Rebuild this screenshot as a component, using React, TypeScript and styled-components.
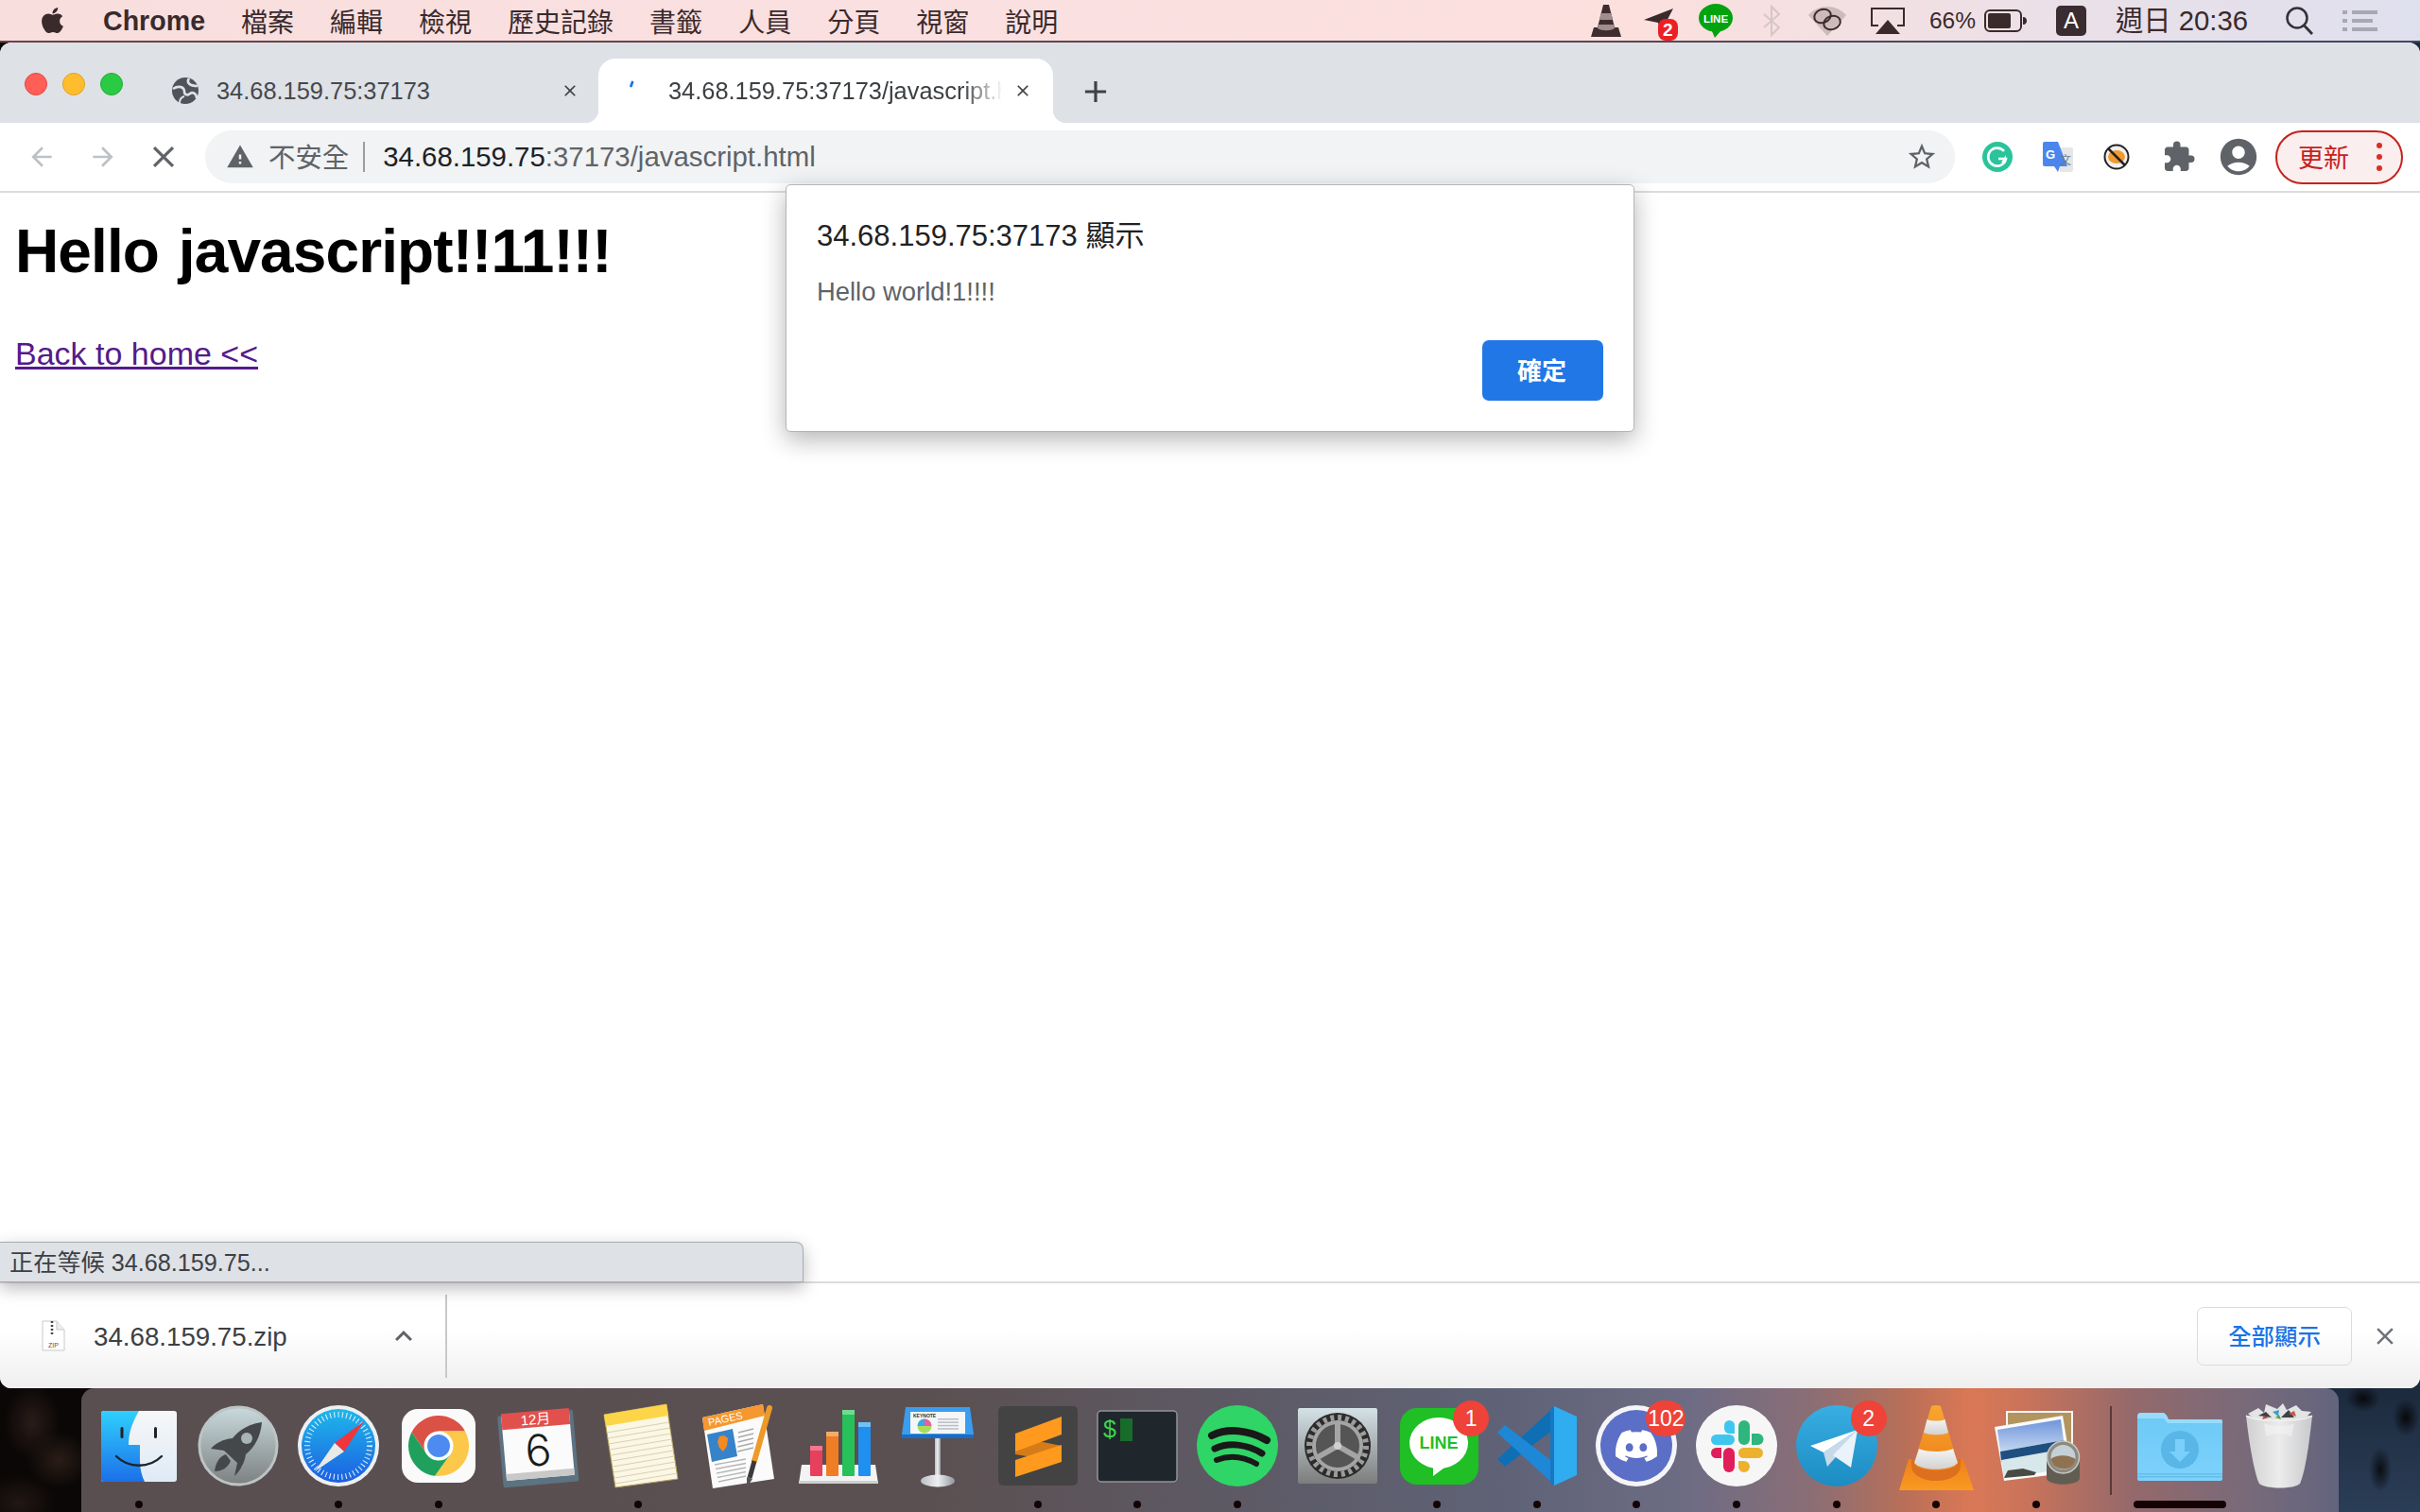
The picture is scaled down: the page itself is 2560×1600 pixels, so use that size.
import React from 'react';
import styled, { createGlobalStyle } from 'styled-components';
import { FaApple, FaDiscord } from 'react-icons/fa';
import { MdClose, MdAdd, MdArrowBack, MdArrowForward, MdWarning, MdStarBorder, MdExtension, MdAccountCircle, MdExpandLess } from 'react-icons/md';

const SANS = '"Liberation Sans","Noto Sans CJK TC",sans-serif';

const Global = createGlobalStyle`
  html, body { margin: 0; padding: 0; background: #0a0706; }
  * { box-sizing: border-box; }
`;

const Screen = styled.div`
  width: 2560px;
  height: 1600px;
  display: flex;
  flex-direction: column;
  overflow: hidden;
  font-family: ${SANS};
  background:
    radial-gradient(ellipse 30px 40px at 34px 1505px, #2a1c18, transparent),
    radial-gradient(ellipse 34px 30px at 62px 1545px, #2b1d18, transparent),
    radial-gradient(ellipse 40px 30px at 20px 1590px, #221713, transparent),
    radial-gradient(ellipse 12px 24px at 2518px 1555px, #0a0d12, transparent),
    radial-gradient(ellipse 18px 14px at 2500px 1480px, #07090c, transparent),
    radial-gradient(ellipse 14px 20px at 2545px 1500px, #07090c, transparent),
    linear-gradient(90deg, #0a0706 0, #0a0706 1280px, transparent 1280px),
    linear-gradient(180deg, #1c2a3d 1469px, #2b3e57 1600px);
`;

/* ---- menu bar ---- */
const MenuBar = styled.header`
  height: 45px;
  flex: none;
  display: flex;
  align-items: center;
  padding: 0 45px 0 40px;
  background: linear-gradient(90deg, #f8dfde 0%, #fae0e0 40%, #fbe0de 68%, #e6e0ea 90%, #dfe0ee 100%);
  border-bottom: 2px solid;
  border-image: linear-gradient(90deg, #6b4347, #5c4750 65%, #404766) 1;
  color: #3a2a2c;
`;
const MenuLeft = styled.nav`
  display: flex;
  align-items: center;
  gap: 38px;
`;
const MenuTitle = styled.span`
  font-size: 28px;
  line-height: 44px;
  white-space: nowrap;
  font-family: "Noto Sans CJK TC", sans-serif;
`;
const AppName = styled.span`
  font: 700 28.6px/44px ${SANS};
`;
const Tray = styled.div`
  margin-left: auto;
  display: flex;
  align-items: center;
`;
const TrayItem = styled.span<{ $ml: number }>`
  margin-left: ${p => p.$ml}px;
  display: flex;
  align-items: center;
  white-space: nowrap;
`;
const TrayText = styled(TrayItem)<{ $size: number }>`
  font-size: ${p => p.$size}px;
  line-height: 44px;
`;

/* ---- browser window ---- */
const BrowserWindow = styled.main`
  flex: none;
  height: 1424px;
  display: flex;
  flex-direction: column;
  background: #fff;
  border-radius: 12px;
  position: relative;
`;
const TabStrip = styled.div`
  height: 85px;
  flex: none;
  display: flex;
  align-items: flex-end;
  background: #dee1e6;
  border-radius: 12px 12px 0 0;
  padding-left: 26px;
`;
const Lights = styled.div`
  display: flex;
  gap: 16px;
  align-self: flex-start;
  margin-top: 32px;
  width: 132px;
`;
const Light = styled.span<{ $c: string; $b: string }>`
  width: 24px;
  height: 24px;
  border-radius: 50%;
  background: ${p => p.$c};
  border: 1px solid ${p => p.$b};
`;
const Tab = styled.div<{ $active?: boolean }>`
  height: 68px;
  flex: none;
  position: relative;
  display: flex;
  align-items: center;
  width: ${p => (p.$active ? 481 : 475)}px;
  padding: 0 ${p => (p.$active ? 22 : 20)}px 0 ${p => (p.$active ? 27 : 24)}px;
  border-radius: 18px 18px 0 0;
  background: ${p => (p.$active ? '#fff' : 'transparent')};
  color: ${p => (p.$active ? '#3c4043' : '#45484c')};
  ${p => p.$active && `
    &::before, &::after {
      content: '';
      position: absolute;
      bottom: 0;
      width: 14px;
      height: 14px;
    }
    &::before { left: -14px; background: radial-gradient(circle at 0 0, transparent 14px, #fff 14.5px); }
    &::after { right: -14px; background: radial-gradient(circle at 100% 0, transparent 14px, #fff 14.5px); }
  `}
`;
const TabIcon = styled.span`
  width: 28px;
  height: 28px;
  margin-right: 19px;
  flex: none;
  display: flex;
`;
const TabTitle = styled.span<{ $fade?: boolean }>`
  flex: 1;
  min-width: 0;
  overflow: hidden;
  white-space: nowrap;
  font-size: 25.4px;
  line-height: 34px;
  ${p => p.$fade && `mask-image: linear-gradient(90deg, #000 88%, transparent 100%); margin-right: 11px;`}
`;
const TabClose = styled.span`
  width: 20px;
  height: 20px;
  flex: none;
  display: flex;
  align-items: center;
  justify-content: center;
  color: #3f4246;
`;
const NewTab = styled.span`
  margin-left: 26px;
  align-self: center;
  margin-top: 19px;
  display: flex;
  color: #3f4347;
`;

const Toolbar = styled.div`
  height: 74px;
  flex: none;
  display: flex;
  align-items: center;
  padding-left: 28px;
  background: #fff;
  border-bottom: 2px solid #dcdce0;
`;
const NavButton = styled.span<{ $ml: number; $c: string }>`
  margin-left: ${p => p.$ml}px;
  display: flex;
  color: ${p => p.$c};
`;
const Omnibox = styled.div`
  width: 1851px;
  height: 56px;
  margin-left: 25px;
  flex: none;
  display: flex;
  align-items: center;
  padding: 0 22px 0 22px;
  border-radius: 28px;
  background: #f1f3f4;
`;
const SecurityIcon = styled.span`
  display: flex;
  color: #5f6368;
`;
const SecurityText = styled.span`
  margin: -3px 0 0 15px;
  font: 28.4px/40px "Noto Sans CJK TC", sans-serif;
  color: #5f6368;
`;
const Separator = styled.span`
  width: 2px;
  height: 32px;
  margin: 0 19px 0 15px;
  background: #9a9da1;
`;
const UrlHost = styled.span`
  font-size: 29.4px;
  color: #202124;
  white-space: nowrap;
`;
const UrlRest = styled.span`
  font-size: 29.4px;
  color: #5f6368;
  white-space: nowrap;
`;
const Star = styled.span`
  margin-left: auto;
  display: flex;
  color: #5f6368;
  margin-right: -4px;
`;
const ToolIcon = styled.span<{ $ml: number; $c?: string }>`
  margin-left: ${p => p.$ml}px;
  display: flex;
  color: ${p => p.$c || '#5f6368'};
`;
const UpdatePill = styled.div`
  width: 135px;
  height: 57px;
  margin-left: 16px;
  flex: none;
  display: flex;
  align-items: center;
  padding-left: 22px;
  border-radius: 29px;
  border: 2.5px solid #c5221f;
  background: #fbeeee;
  color: #c5221f;
  font: 27px/40px "Noto Sans CJK TC", sans-serif;
`;
const UpdateDots = styled.span`
  margin-left: 29px;
  display: flex;
  flex-direction: column;
  gap: 6px;
`;
const UpdateDot = styled.i`
  display: block;
  width: 6px;
  height: 6px;
  border-radius: 50%;
  background: #d93025;
`;

/* ---- page ---- */
const Content = styled.section`
  flex: 1;
  position: relative;
  padding: 24px 16px 0;
  background: #fff;
  color: #000;
`;
const Heading = styled.h1`
  margin: 0;
  font: 700 64px/76px ${SANS};
  letter-spacing: -0.9px;
  word-spacing: 4px;
`;
const BackLink = styled.a`
  display: inline-block;
  margin-top: 50px;
  font-size: 34px;
  line-height: 40px;
  color: #551a8b;
  text-decoration: underline;
`;
const Dialog = styled.div`
  position: absolute;
  top: -9px;
  left: 831px;
  width: 898px;
  height: 262px;
  padding: 34px 33px 0 32px;
  background: #fff;
  border: 1px solid #b5b5b5;
  border-radius: 5px;
  box-shadow: 0 8px 26px rgba(0, 0, 0, 0.3);
  display: flex;
  flex-direction: column;
`;
const DialogTitle = styled.div`
  font-size: 31px;
  line-height: 40px;
  color: #202124;
`;
const DialogMessage = styled.div`
  margin-top: 22px;
  font-size: 27.4px;
  line-height: 34px;
  color: #5f6368;
`;
const DialogActions = styled.div`
  margin-top: 34px;
  display: flex;
  justify-content: flex-end;
`;
const OkButton = styled.button`
  width: 128px;
  height: 64px;
  margin-right: -1px;
  padding: 0 2px 3px 0;
  border: 0;
  border-radius: 7px;
  background: #2277e6;
  color: #fff;
  font: 700 26px/1 "Noto Sans CJK TC", sans-serif;
`;
const StatusBubble = styled.div`
  position: absolute;
  left: 0;
  bottom: -1px;
  width: 850px;
  height: 43px;
  padding: 0 0 4px 10px;
  display: flex;
  align-items: center;
  font-size: 25.2px;
  color: #3c4043;
  background: #dee1e6;
  border: 1px solid #a9abae;
  border-left: 0;
  border-radius: 0 8px 0 0;
  box-shadow: 0 6px 18px rgba(0, 0, 0, 0.28);
  z-index: 2;
`;

/* ---- download shelf ---- */
const Shelf = styled.footer`
  height: 113px;
  flex: none;
  display: flex;
  align-items: center;
  padding-left: 44px;
  border-top: 2px solid #dcdce0;
  border-radius: 0 0 12px 12px;
  background: linear-gradient(180deg, #fff 0%, #fff 45%, #efefef 100%);
`;
const FileIcon = styled.span`
  display: flex;
  width: 25px;
  flex: none;
`;
const FileName = styled.span`
  margin-left: 30px;
  width: 310px;
  padding-top: 2px;
  font-size: 27.7px;
  color: #3c4043;
`;
const ShelfChevron = styled.span`
  display: flex;
  color: #5f6368;
`;
const ShelfDivider = styled.span`
  width: 2px;
  height: 88px;
  margin-left: 26px;
  background: #c9c9cb;
`;
const ShowAll = styled.button`
  margin-left: auto;
  width: 164px;
  height: 62px;
  background: transparent;
  border: 1.5px solid #dadce0;
  border-radius: 7px;
  color: #1a73e8;
  font: 500 24.4px/1 "Noto Sans CJK TC", sans-serif;
`;
const ShelfClose = styled.span`
  margin: 0 22px 0 20px;
  display: flex;
  color: #6f7276;
`;

/* ---- dock ---- */
const Dock = styled.div`
  flex: none;
  width: 2388px;
  height: 131px;
  margin-left: 86px;
  padding-left: 8px;
  display: flex;
  border-radius: 14px 14px 0 0;
  background: linear-gradient(90deg, #5a4f50 0, #5b5051 900px, #5f6276 1500px, #6d6c84 1700px, #8a6e75 1830px, #b96f58 1930px, #da7856 2000px, #c8735a 2060px, #94696b 2170px, #766a7a 2300px, #63647e 2388px);
`;
const DockSlot = styled.div`
  width: 105.65px;
  flex: none;
  position: relative;
  display: flex;
  flex-direction: column;
  align-items: center;
  padding-top: 17px;
`;
const DockDot = styled.i<{ $wide?: boolean; $hide?: boolean }>`
  display: block;
  width: ${p => (p.$wide ? 98 : 8)}px;
  height: 8px;
  margin-top: 14px;
  border-radius: 4px;
  background: ${p => (p.$hide ? 'transparent' : '#140305')};
`;
const DockDivider = styled.span`
  width: 2px;
  height: 94px;
  margin: 19px 19px 0 25px;
  background: #5a3a38;
`;
const Badge = styled.span<{ $x: number; $w: number }>`
  position: absolute;
  top: 13px;
  left: calc(50% + ${p => p.$x}px);
  transform: translateX(-50%);
  min-width: ${p => p.$w}px;
  height: 38px;
  border-radius: 19px;
  background: #ef4238;
  color: #fff;
  font-size: 23px;
  line-height: 38px;
  text-align: center;
`;

/* ---- drawings ---- */
const Svg = styled.svg`
  display: block;
  overflow: visible;
`;
const SvgText = styled.text`
  font-family: ${SANS};
`;
const ThinText = styled.text`
  font-family: Inter, "Liberation Sans", sans-serif;
  font-weight: 300;
`;
const Dock88: React.FC<{ children: React.ReactNode }> = ({ children }) => (
  <Svg width="88" height="88" viewBox="0 0 88 88">{children}</Svg>
);

const Finder = () => (
  <Dock88>
    <defs>
      <linearGradient id="fb" x1="0" y1="0" x2="0" y2="1"><stop offset="0" stopColor="#2fd0fd" /><stop offset="1" stopColor="#1c6fe9" /></linearGradient>
      <linearGradient id="fw" x1="0" y1="0" x2="0" y2="1"><stop offset="0" stopColor="#f6f7f8" /><stop offset="1" stopColor="#dfeaf5" /></linearGradient>
    </defs>
    <rect x="4" y="7" width="80" height="75" rx="3" fill="url(#fw)" />
    <path d="M7 7H44C38 18 33 28 33 43H45V60C45 68 47 76 50 82H7C5 82 4 81 4 79V10C4 8 5 7 7 7Z" fill="url(#fb)" />
    <rect x="24.5" y="24" width="3" height="12" rx="1.5" fill="#222" />
    <rect x="60" y="24" width="3" height="12" rx="1.5" fill="#222" />
    <path d="M20 55C33 68 55 68 68 55" fill="none" stroke="#1c2530" strokeWidth="2.4" strokeLinecap="round" />
  </Dock88>
);
const Launchpad = () => (
  <Dock88>
    <defs>
      <linearGradient id="lp" x1="0" y1="0" x2="0" y2="1"><stop offset="0" stopColor="#c9dadd" /><stop offset="1" stopColor="#7d8080" /></linearGradient>
    </defs>
    <circle cx="44" cy="44" r="41" fill="url(#lp)" stroke="#bcc4c4" strokeWidth="3" />
    <path d="M69 19C55 21 45 27 38 36C28 37 20 41 15 47L29 49L43 62L40 76C46 70 51 62 52 53C62 45 68 33 69 19Z" fill="#45484a" />
    <path d="M31 53C24 55 20 62 19 71C27 71 33 67 36 60Z" fill="#45484a" />
    <circle cx="53" cy="36" r="6" fill="#a9b4b6" />
  </Dock88>
);
const Safari = () => (
  <Dock88>
    <defs>
      <linearGradient id="sf" x1="0" y1="0" x2="0" y2="1"><stop offset="0" stopColor="#1eb8ea" /><stop offset="1" stopColor="#1c5fe2" /></linearGradient>
    </defs>
    <circle cx="44" cy="44" r="43" fill="#eef0f2" />
    <circle cx="44" cy="44" r="39" fill="url(#sf)" />
    <circle cx="44" cy="44" r="33" fill="none" stroke="#d9ecfa" strokeWidth="6" strokeDasharray="1.1 3.2" />
    <polygon points="71,18 40,41 50,50" fill="#f0353b" />
    <polygon points="19,71 40,41 50,50" fill="#e9e9e9" />
  </Dock88>
);
const Chrome = () => (
  <Dock88>
    <rect x="5" y="5" width="78" height="78" rx="17" fill="#fafafa" />
    <path d="M15.5 29.5A32 32 0 0 1 72 28.5H44L31 52Z" fill="#dc5145" />
    <path d="M72 28.5A32 32 0 0 1 40 75.8L57 52L44 28.5Z" fill="#fcc84a" />
    <path d="M40 75.8A32 32 0 0 1 15.5 29.5L31 52L57 52Z" fill="#1fa15d" />
    <circle cx="44" cy="44" r="15.5" fill="#fff" />
    <circle cx="44" cy="44" r="12" fill="#4d8bf0" />
  </Dock88>
);
const Calendar = () => (
  <Dock88>
    <g transform="rotate(-5 44 44)">
      <rect x="4" y="9" width="80" height="76" rx="2" fill="#5c7382" />
      <rect x="8" y="10" width="72" height="68" fill="#fbfbfb" />
      <rect x="8" y="71" width="72" height="7" fill="#c9c9c9" />
      <rect x="8" y="7" width="72" height="17" fill="#e2504d" />
      <SvgText x="44" y="21" fontSize="15" fill="#fff" textAnchor="middle">12月</SvgText>
      <ThinText x="44" y="65" fontSize="46" fill="#1c1c1c" textAnchor="middle">6</ThinText>
    </g>
  </Dock88>
);
const Notes = () => {
  const lines = [0, 1, 2, 3, 4, 5, 6, 7, 8, 9];
  return (
    <Dock88>
      <polygon points="8,11 74,0 86,79 20,88" fill="#fbf7e2" stroke="#b8a25a" strokeWidth="1" />
      <polygon points="8,11 74,0 76,12 10,23" fill="#fdd549" />
      {lines.map(i => (
        <line key={i} x1={11 + i * 1} y1={30 + i * 6} x2={77 + i * 0.9} y2={19 + i * 6} stroke="#d4d0bd" strokeWidth="1" />
      ))}
    </Dock88>
  );
};
const Pages = () => (
  <Dock88>
    <polygon points="6,14 70,0 82,79 17,89" fill="#fbfbfb" />
    <polygon points="6,14 70,0 72,12 8,28" fill="#f6972f" />
    <SvgText x="0" y="0" fontSize="11" fill="#fff" transform="translate(13 23) rotate(-12)">PAGES</SvgText>
    <polygon points="11,32 38,26 43,55 16,61" fill="#3683c9" />
    <path d="M24 34L29 33L33 36L32 44L28 50L24 46L22 40Z" fill="#f48a22" />
    {[0, 1, 2, 3, 4].map(i => (
      <line key={i} x1={44 - i * 0.2} y1={30 + i * 5} x2={60} y2={26 + i * 5} stroke="#aaa" strokeWidth="1.4" />
    ))}
    {[0, 1, 2, 3, 4].map(i => (
      <line key={i} x1={19 + i} y1={64 + i * 4.5} x2={52} y2={58 + i * 4.5} stroke="#b5b5b5" strokeWidth="1.4" />
    ))}
    <line x1="77" y1="4" x2="61" y2="60" stroke="#ee9a28" strokeWidth="6" strokeLinecap="round" />
    <line x1="61" y1="60" x2="56" y2="78" stroke="#3b3b3b" strokeWidth="5" />
    <polygon points="53,77 59,79 53,88" fill="#555" />
  </Dock88>
);
const Numbers = () => (
  <Dock88>
    <polygon points="6,64 84,64 87,84 3,84" fill="#f3f3f3" />
    <rect x="3" y="81" width="84" height="3" fill="#cfcfcf" />
    <rect x="15" y="44" width="13" height="32" rx="1" fill="#e7405c" />
    <rect x="15" y="44" width="13" height="5" fill="#f2778b" />
    <rect x="32" y="29" width="13" height="47" rx="1" fill="#ee7d23" />
    <rect x="32" y="29" width="13" height="5" fill="#f3ab6b" />
    <rect x="49" y="6" width="13" height="70" rx="1" fill="#27c15a" />
    <rect x="49" y="6" width="13" height="5" fill="#6fdc92" />
    <rect x="66" y="19" width="13" height="57" rx="1" fill="#1f8ff0" />
    <rect x="66" y="19" width="13" height="5" fill="#6fc2f7" />
  </Dock88>
);
const Keynote = () => (
  <Dock88>
    <defs>
      <linearGradient id="kb" x1="0" y1="0" x2="1" y2="0"><stop offset="0" stopColor="#b9bfc4" /><stop offset=".5" stopColor="#eef0f2" /><stop offset="1" stopColor="#8f969c" /></linearGradient>
    </defs>
    <rect x="41" y="36" width="6" height="44" fill="url(#kb)" />
    <ellipse cx="44" cy="81" rx="18" ry="6.5" fill="url(#kb)" />
    <polygon points="10,3 78,3 82,32 6,32" fill="#3a9df0" />
    <rect x="6" y="32" width="76" height="4" fill="#1b6cc4" />
    <rect x="15" y="8" width="58" height="23" fill="#f4f6f8" />
    <SvgText x="18" y="14" fontSize="5" fill="#333" fontWeight="700">KEYNOTE</SvgText>
    <circle cx="30" cy="23" r="7.5" fill="#a8dd5b" />
    <path d="M30 23V15.5A7.5 7.5 0 0 1 37.5 23Z" fill="#ef5aa0" />
    <path d="M30 23V15.5A7.5 7.5 0 0 0 22.5 23Z" fill="#38a8e8" />
    {[0, 1, 2, 3].map(i => (
      <rect key={i} x="44" y={15 + i * 3.4} width="22" height="1.5" fill="#b9bdc2" />
    ))}
  </Dock88>
);
const Sublime = () => (
  <Dock88>
    <rect x="2" y="2" width="84" height="84" rx="5" fill="#434343" />
    <polygon points="20,34 69,44 69,61 20,53" fill="#d47c18" />
    <polygon points="69,13 20,31 20,50 69,32" fill="#ff9a1f" />
    <polygon points="69,43 69,61 20,77 20,59" fill="#ff9a1f" />
  </Dock88>
);
const Terminal = () => (
  <Dock88>
    <rect x="2" y="7" width="84" height="75" rx="4" fill="#1f272d" stroke="#8f9598" strokeWidth="1.5" />
    <SvgText x="8" y="35" fontSize="25" fill="#3fd34f">$</SvgText>
    <rect x="26" y="15" width="13" height="24" fill="#186c2a" />
  </Dock88>
);
const Spotify = () => (
  <Dock88>
    <circle cx="44" cy="44" r="43" fill="#2fd566" />
    <path d="M17 33C34 25 56 27 75 38" fill="none" stroke="#191919" strokeWidth="8" strokeLinecap="round" />
    <path d="M20 47C35 40 54 42 70 52" fill="none" stroke="#191919" strokeWidth="7" strokeLinecap="round" />
    <path d="M22 59C35 54 50 55 64 63" fill="none" stroke="#191919" strokeWidth="6" strokeLinecap="round" />
  </Dock88>
);
const SysPrefs = () => (
  <Dock88>
    <defs>
      <linearGradient id="sp" x1="0" y1="0" x2="0" y2="1"><stop offset="0" stopColor="#d4e2e7" /><stop offset="1" stopColor="#7c7c7c" /></linearGradient>
    </defs>
    <rect x="2" y="4" width="84" height="80" rx="2" fill="url(#sp)" />
    <circle cx="44" cy="44" r="35" fill="#2c2c2c" />
    <circle cx="44" cy="44" r="30" fill="none" stroke="#9c9c9c" strokeWidth="6" strokeDasharray="4 3.85" />
    <circle cx="44" cy="44" r="25" fill="#555" stroke="#a5a5a5" strokeWidth="4" />
    <g stroke="#a5a5a5" strokeWidth="6" strokeLinecap="round">
      <line x1="44" y1="44" x2="44" y2="20" />
      <line x1="44" y1="44" x2="65" y2="56" />
      <line x1="44" y1="44" x2="23" y2="56" />
    </g>
    <circle cx="44" cy="44" r="4" fill="#d0d0d0" />
  </Dock88>
);
const Line = () => (
  <Dock88>
    <rect x="5" y="4" width="83" height="81" rx="18" fill="#1fbf25" />
    <ellipse cx="46" cy="41" rx="31" ry="27" fill="#fff" />
    <path d="M40 66L40 76L56 64Z" fill="#fff" />
    <SvgText x="46" y="47" fontSize="18" fontWeight="700" fill="#1fbf25" textAnchor="middle">LINE</SvgText>
  </Dock88>
);
const VSCode = () => (
  <Dock88>
    <polygon points="62,3 62,26 10,66 2,58" fill="#0f6fb5" />
    <polygon points="10,22 62,62 62,85 2,30" fill="#1e88d6" />
    <polygon points="62,2 86,13 86,75 62,86" fill="#2fadf0" />
    <polygon points="62,2 62,86 58,83 58,5" fill="#1678c2" />
  </Dock88>
);
const Discord = () => (
  <Dock88>
    <circle cx="44" cy="44" r="43" fill="#f5f5f8" />
    <circle cx="44" cy="44" r="38" fill="#5b6fc6" />
    <FaDiscord x="20" y="20" size={48} color="#fff" />
  </Dock88>
);
const Slack = () => (
  <Dock88>
    <circle cx="44" cy="44" r="43" fill="#f6f6f6" />
    <rect x="17" y="32" width="25" height="11" rx="5.5" fill="#3fc6ef" />
    <path d="M31 22.5A5.5 5.5 0 0 1 42 22.5V31H36.5A5.5 5.5 0 0 1 31 25.5Z" fill="#3fc6ef" />
    <rect x="46" y="17" width="12" height="26" rx="6" fill="#2eb67d" />
    <path d="M60 31H66.500A5.5 5.5 0 0 1 66.500 43H60Z" fill="#2eb67d" />
    <rect x="46" y="46" width="26" height="11" rx="5.5" fill="#ecb22e" />
    <path d="M46 60H52A6 6 0 0 1 52 72A6 6 0 0 1 46 66Z" fill="#ecb22e" />
    <rect x="30" y="46" width="12" height="26" rx="6" fill="#e01e5a" />
    <path d="M28 46V57H22.500A5.500 5.500 0 0 1 22.500 46Z" fill="#e01e5a" />
  </Dock88>
);
const Telegram = () => (
  <Dock88>
    <defs>
      <linearGradient id="tg" x1="0" y1="0" x2="0" y2="1"><stop offset="0" stopColor="#38aee3" /><stop offset="1" stopColor="#1c8cc2" /></linearGradient>
    </defs>
    <circle cx="44" cy="44" r="43" fill="url(#tg)" />
    <polygon points="66,27 30,51 34,66 42,57" fill="#c8daea" />
    <polygon points="66,27 16,44 30,51" fill="#fff" />
    <polygon points="66,27 40,54 59,67" fill="#eaf3fa" />
  </Dock88>
);
const Vlc = () => (
  <Dock88>
    <defs>
      <linearGradient id="vc" x1="0" y1="0" x2="0" y2="1"><stop offset="0" stopColor="#f9a72f" /><stop offset="1" stopColor="#ee7f1a" /></linearGradient>
      <linearGradient id="vb" x1="0" y1="0" x2="0" y2="1"><stop offset="0" stopColor="#ee7f1a" /><stop offset="1" stopColor="#fa9a22" /></linearGradient>
      <linearGradient id="vs" x1="0" y1="0" x2="0" y2="1"><stop offset="0" stopColor="#f4f4f4" /><stop offset="1" stopColor="#d2d2d2" /></linearGradient>
    </defs>
    <polygon points="15,58 73,58 84,91 5,91" fill="url(#vb)" />
    <path d="M18 58V66C20 86 68 86 70 66V58Z" fill="#dd701f" />
    <path d="M39 2Q44 0 49 2L67 62C62 73 26 73 21 62Z" fill="url(#vc)" />
    <path d="M34.500 16C38 18 50 18 53.500 16L57 30C52 33 36 33 31 30Z" fill="url(#vs)" />
    <path d="M26 47C34 51 54 51 62 47L67 62C60 71 28 71 21 62Z" fill="url(#vs)" />
  </Dock88>
);
const Preview = () => (
  <Dock88>
    <defs>
      <linearGradient id="ps" x1="0" y1="0" x2="0" y2="1"><stop offset="0" stopColor="#6f94dc" /><stop offset="1" stopColor="#c3d7f0" /></linearGradient>
    </defs>
    <rect x="12" y="7" width="71" height="62" fill="#f5f5f5" />
    <rect x="14" y="9" width="67" height="58" fill="#b2945f" />
    <polygon points="0,24 72,12 82,72 10,81" fill="#fafafa" />
    <polygon points="3,27 70,16 73,38 6,50" fill="url(#ps)" />
    <polygon points="6,50 73,38 75,50 7,61" fill="#1f4f80" />
    <polygon points="7,59 75,47 78,68 10,78" fill="#d8e8ea" />
    <polygon points="10,78 14,70 30,68 44,72 42,75" fill="#4a4a44" />
    <path d="M55 56V78C55 87 90 87 90 78V56Z" fill="#625d52" />
    <circle cx="72.500" cy="56" r="17" fill="#8d8a80" stroke="#c8c8c2" strokeWidth="1.500" />
    <circle cx="72.500" cy="56" r="13" fill="#c5d0d6" />
    <path d="M59.500 58C66 52 80 54 85.500 58C84 72 62 72 59.500 58Z" fill="#8f7252" />
  </Dock88>
);
const Folder = () => (
  <Dock88>
    <defs>
      <linearGradient id="fd" x1="0" y1="0" x2="0" y2="1"><stop offset="0" stopColor="#6dc9f6" /><stop offset="1" stopColor="#7dd2fb" /></linearGradient>
    </defs>
    <path d="M-1 13Q-1 9 3 9H26Q28 9 30 12L32 16H87Q89 16 89 19V79Q89 81 87 81H1Q-1 81 -1 79Z" fill="url(#fd)" />
    <path d="M-1 13Q-1 9 3 9H26Q28 9 30 12L32 16H87Q89 16 89 19V20H31L27 15H-1Z" fill="#97dcfc" />
    <rect x="-1" y="73" width="90" height="1.500" fill="#63bdec" />
    <rect x="-1" y="76" width="90" height="1.500" fill="#63bdec" />
    <circle cx="44" cy="48" r="20" fill="#59b6e6" />
    <path d="M39 37H49V50H55L44 61L33 50H39Z" fill="#7ad0fb" />
  </Dock88>
);
const Trash = () => (
  <Dock88>
    <defs>
      <linearGradient id="tr" x1="0" y1="0" x2="1" y2="0"><stop offset="0" stopColor="#d0d0d2" /><stop offset=".5" stopColor="#ececec" /><stop offset="1" stopColor="#c8c9cb" /></linearGradient>
    </defs>
    <path d="M9 12C12 40 18 75 23 84C30 90 60 90 66 84C72 70 76 40 79 12Z" fill="url(#tr)" />
    <path d="M11 10L22 4L28 9L30 0L42 5L48 -1L52 6L62 1L68 7L78 8L72 14L44 18L18 15Z" fill="#e4e4e4" />
    <path d="M22 12L30 8L36 14ZM46 14L54 6L60 14Z" fill="#3d4148" />
    <path d="M37 8L44 6L43 13Z" fill="#3ea0c8" />
    <path d="M40 14L44 11L46 16Z" fill="#4fa84f" />
    <path d="M54 10L60 7L62 13Z" fill="#c65a3c" />
    <path d="M28 12L33 14L26 16Z" fill="#b84a3a" />
    <path d="M9 12C18 19 70 19 79 12" fill="none" stroke="#f4f4f4" strokeWidth="1.500" />
    <path d="M28 20C36 24 52 24 60 20L57 34C48 30 38 30 30 34Z" fill="#f3f3f3" opacity=".6" />
  </Dock88>
);

const MenuVlc = () => (
  <Svg width="32" height="36" viewBox="0 0 32 36">
    <path d="M13 1H19L25 25H29L32 35H0L3 25H7Z" fill="#3f2c2e" />
    <path d="M10.500 10H21.500L23 17H9Z" fill="#a28d8d" />
    <path d="M7.800 22H24.200L25 26C20 29 12 29 7 26Z" fill="#a28d8d" />
  </Svg>
);
const PlaneWrap = styled.span`
  position: relative;
  width: 37px;
  height: 36px;
  display: block;
`;
const PlaneBadge = styled.span`
  position: absolute;
  left: 15px;
  top: 16px;
  width: 21px;
  height: 23px;
  border-radius: 8px;
  background: #ec2024;
  color: #fff;
  font: 700 19px/23px ${SANS};
  text-align: center;
`;
const MenuPlane = () => (
  <PlaneWrap>
    <Svg width="31" height="30" viewBox="0 0 31 30">
      <path d="M31 5L0 17L15 20L18 30Z" fill="#3a2a2c" />
    </Svg>
    <PlaneBadge>2</PlaneBadge>
  </PlaneWrap>
);
const MenuLine = () => (
  <Svg width="36" height="36" viewBox="0 0 36 36">
    <ellipse cx="18" cy="15" rx="18" ry="15" fill="#00a30e" />
    <path d="M14 29L17 36L24 28Z" fill="#00a30e" />
    <SvgText x="18" y="20" fontSize="11.500" fontWeight="700" fill="#fff" textAnchor="middle">LINE</SvgText>
  </Svg>
);
const MenuBluetooth = () => (
  <Svg width="18" height="32" viewBox="0 0 18 32">
    <path d="M1 9L17 23L9 31V1L17 9L1 23" fill="none" stroke="#d6c6c6" strokeWidth="2" />
  </Svg>
);
const MenuContinuity = () => (
  <Svg width="40" height="32" viewBox="0 0 40 32">
    <path d="M0 10C11 -2 29 -2 40 10L20 32Z" fill="#cdbaba" />
    <ellipse cx="15" cy="11" rx="9" ry="7" fill="none" stroke="#3a2a2c" strokeWidth="2" transform="rotate(-20 15 11)" />
    <ellipse cx="25" cy="18" rx="9" ry="7" fill="none" stroke="#3a2a2c" strokeWidth="2" transform="rotate(-20 25 18)" />
  </Svg>
);
const MenuAirplay = () => (
  <Svg width="36" height="28" viewBox="0 0 36 28">
    <path d="M8 19H1V1H35V19H28" fill="none" stroke="#3a2a2c" strokeWidth="2" />
    <polygon points="18,13 31,28 5,28" fill="#3a2a2c" />
  </Svg>
);
const MenuBattery = () => (
  <Svg width="45" height="24" viewBox="0 0 45 24">
    <rect x="1" y="1" width="38" height="22" rx="5" fill="none" stroke="#3a2a2c" strokeWidth="2" />
    <rect x="4" y="4" width="24" height="16" rx="2" fill="#3a2a2c" />
    <path d="M41 8C44 8 45 10 45 12C45 14 44 16 41 16Z" fill="#3a2a2c" />
  </Svg>
);
const InputBadge = styled.span`
  width: 32px;
  height: 32px;
  border-radius: 5px;
  background: #3a2c30;
  color: #fff;
  font-size: 24px;
  line-height: 32px;
  text-align: center;
  display: block;
`;
const MenuSearch = () => (
  <Svg width="29" height="30" viewBox="0 0 29 30">
    <circle cx="12" cy="12" r="10.500" fill="none" stroke="#33303a" strokeWidth="2.500" />
    <line x1="19.500" y1="20" x2="28" y2="29" stroke="#33303a" strokeWidth="2.800" />
  </Svg>
);
const MenuList = () => (
  <Svg width="37" height="24" viewBox="0 0 37 24">
    <g fill="#a8a8b4">
      <rect x="0" y="1" width="5" height="4" /><rect x="10" y="1" width="27" height="4" />
      <rect x="0" y="10" width="5" height="4" /><rect x="10" y="10" width="22" height="4" />
      <rect x="0" y="19" width="5" height="4" /><rect x="10" y="19" width="27" height="4" />
    </g>
  </Svg>
);
const Globe = () => (
  <Svg width="28" height="28" viewBox="0 0 28 28">
    <circle cx="14" cy="14" r="14" fill="#50545a" />
    <path d="M1 12C7 8 13 10 13 15C13 19 17 19 19 17C22 15 26 17 26 22" fill="none" stroke="#dee1e6" strokeWidth="2.600" />
    <path d="M18 1C15 5 18 9 27 9" fill="none" stroke="#dee1e6" strokeWidth="2.600" />
    <path d="M8 27C8 23 9 21 13 20" fill="none" stroke="#dee1e6" strokeWidth="2" />
  </Svg>
);
const Spinner = () => (
  <Svg width="28" height="28" viewBox="0 0 28 28">
    <path d="M9 5L7.500 9" stroke="#1a73e8" strokeWidth="2.800" strokeLinecap="round" />
  </Svg>
);
const Grammarly = () => (
  <Svg width="32" height="32" viewBox="0 0 32 32">
    <circle cx="16" cy="16" r="16" fill="#29c49c" />
    <path d="M23 10A9.500 9.500 0 1 0 25 18H17" fill="none" stroke="#fff" strokeWidth="2.600" />
    <path d="M25 14V22H20Z" fill="#fff" />
  </Svg>
);
const Translate = () => (
  <Svg width="32" height="32" viewBox="0 0 32 32">
    <path d="M14 6H30Q32 6 32 8V30Q32 32 30 32H18Z" fill="#e4e6e8" />
    <path d="M2 0H16L26 26H18L16 32L12 26H2Q0 26 0 24V2Q0 0 2 0Z" fill="#4a86ee" />
    <SvgText x="8" y="18" fontSize="13" fontWeight="700" fill="#fff" textAnchor="middle">G</SvgText>
    <SvgText x="24" y="24" fontSize="12" fill="#687a8a" textAnchor="middle">文</SvgText>
  </Svg>
);
const Blocked = () => (
  <Svg width="28" height="28" viewBox="0 0 28 28">
    <circle cx="14" cy="14" r="12.500" fill="#f0f0f0" stroke="#222" strokeWidth="2" />
    <ellipse cx="14" cy="14" rx="9" ry="7" fill="#f09a30" />
    <line x1="5" y1="5" x2="23" y2="23" stroke="#222" strokeWidth="2.500" />
  </Svg>
);
const ZipIcon = () => (
  <Svg width="25" height="33" viewBox="0 0 25 33">
    <path d="M1 1H16L24 10V32H1Z" fill="#fff" stroke="#c9c9c9" strokeWidth="1" />
    <path d="M16 1V10H24" fill="#eee" stroke="#c9c9c9" strokeWidth="1" />
    <line x1="11" y1="1" x2="11" y2="17" stroke="#444" strokeWidth="2.500" strokeDasharray="2 2" />
    <SvgText x="12.500" y="29" fontSize="7" fill="#555" textAnchor="middle">ZIP</SvgText>
  </Svg>
);

const dockApps: { C: React.FC; dot?: boolean; badge?: [string, number, number] }[] = [
  { C: Finder, dot: true },
  { C: Launchpad },
  { C: Safari, dot: true },
  { C: Chrome, dot: true },
  { C: Calendar },
  { C: Notes, dot: true },
  { C: Pages },
  { C: Numbers },
  { C: Keynote },
  { C: Sublime, dot: true },
  { C: Terminal, dot: true },
  { C: Spotify, dot: true },
  { C: SysPrefs },
  { C: Line, dot: true, badge: ['1', 36, 38] },
  { C: VSCode, dot: true },
  { C: Discord, dot: true, badge: ['102', 31, 42] },
  { C: Slack, dot: true },
  { C: Telegram, dot: true, badge: ['2', 34, 38] },
  { C: Vlc, dot: true },
  { C: Preview, dot: true },
];

export default function App() {
  const menus = ['檔案', '編輯', '檢視', '歷史記錄', '書籤', '人員', '分頁', '視窗', '說明'];
  return (
    <Screen>
      <Global />
      <MenuBar>
        <MenuLeft>
          <FaApple size={31} color="#3a2a2c" />
          <AppName>Chrome</AppName>
          {menus.map(m => <MenuTitle key={m}>{m}</MenuTitle>)}
        </MenuLeft>
        <Tray>
          <TrayItem $ml={0}><MenuVlc /></TrayItem>
          <TrayItem $ml={24}><MenuPlane /></TrayItem>
          <TrayItem $ml={21}><MenuLine /></TrayItem>
          <TrayItem $ml={32}><MenuBluetooth /></TrayItem>
          <TrayItem $ml={30}><MenuContinuity /></TrayItem>
          <TrayItem $ml={26}><MenuAirplay /></TrayItem>
          <TrayText $ml={26} $size={24.5}>66%</TrayText>
          <TrayItem $ml={9}><MenuBattery /></TrayItem>
          <TrayItem $ml={31}><InputBadge>A</InputBadge></TrayItem>
          <TrayText $ml={31} $size={29.3}>週日 20:36</TrayText>
          <TrayItem $ml={40}><MenuSearch /></TrayItem>
          <TrayItem $ml={31}><MenuList /></TrayItem>
        </Tray>
      </MenuBar>

      <BrowserWindow>
        <TabStrip>
          <Lights>
            <Light $c="#ff5f57" $b="#e5453e" />
            <Light $c="#ffbd2e" $b="#e0a125" />
            <Light $c="#2bca45" $b="#20ad35" />
          </Lights>
          <Tab>
            <TabIcon><Globe /></TabIcon>
            <TabTitle>34.68.159.75:37173</TabTitle>
            <TabClose><MdClose size={32} /></TabClose>
          </Tab>
          <Tab $active>
            <TabIcon><Spinner /></TabIcon>
            <TabTitle $fade>34.68.159.75:37173/javascript.html</TabTitle>
            <TabClose><MdClose size={32} /></TabClose>
          </Tab>
          <NewTab><MdAdd size={38} /></NewTab>
        </TabStrip>

        <Toolbar>
          <NavButton $ml={0} $c="#bdc1c6"><MdArrowBack size={32} /></NavButton>
          <NavButton $ml={33} $c="#bdc1c6"><MdArrowForward size={32} /></NavButton>
          <NavButton $ml={29} $c="#5f6368"><MdClose size={38} /></NavButton>
          <Omnibox>
            <SecurityIcon><MdWarning size={30} /></SecurityIcon>
            <SecurityText>不安全</SecurityText>
            <Separator />
            <UrlHost>34.68.159.75</UrlHost>
            <UrlRest>:37173/javascript.html</UrlRest>
            <Star><MdStarBorder size={34} /></Star>
          </Omnibox>
          <ToolIcon $ml={29}><Grammarly /></ToolIcon>
          <ToolIcon $ml={32}><Translate /></ToolIcon>
          <ToolIcon $ml={32}><Blocked /></ToolIcon>
          <ToolIcon $ml={34}><MdExtension size={36} /></ToolIcon>
          <ToolIcon $ml={22}><MdAccountCircle size={46} /></ToolIcon>
          <UpdatePill>
            更新
            <UpdateDots><UpdateDot /><UpdateDot /><UpdateDot /></UpdateDots>
          </UpdatePill>
        </Toolbar>

        <Content>
          <Heading>Hello javascript!!11!!!</Heading>
          <BackLink href="#">Back to home &lt;&lt;</BackLink>
          <Dialog>
            <DialogTitle>34.68.159.75:37173 顯示</DialogTitle>
            <DialogMessage>Hello world!1!!!!</DialogMessage>
            <DialogActions><OkButton>確定</OkButton></DialogActions>
          </Dialog>
          <StatusBubble>正在等候 34.68.159.75...</StatusBubble>
        </Content>

        <Shelf>
          <FileIcon><ZipIcon /></FileIcon>
          <FileName>34.68.159.75.zip</FileName>
          <ShelfChevron><MdExpandLess size={36} /></ShelfChevron>
          <ShelfDivider />
          <ShowAll>全部顯示</ShowAll>
          <ShelfClose><MdClose size={30} /></ShelfClose>
        </Shelf>
      </BrowserWindow>

      <Dock>
        {dockApps.map(({ C, dot, badge }, i) => (
          <DockSlot key={i}>
            <C />
            <DockDot $hide={!dot} />
            {badge && <Badge $x={badge[1]} $w={badge[2]}>{badge[0]}</Badge>}
          </DockSlot>
        ))}
        <DockDivider />
        <DockSlot>
          <Folder />
          <DockDot $wide />
        </DockSlot>
        <DockSlot>
          <Trash />
          <DockDot $hide />
        </DockSlot>
      </Dock>
    </Screen>
  );
}
